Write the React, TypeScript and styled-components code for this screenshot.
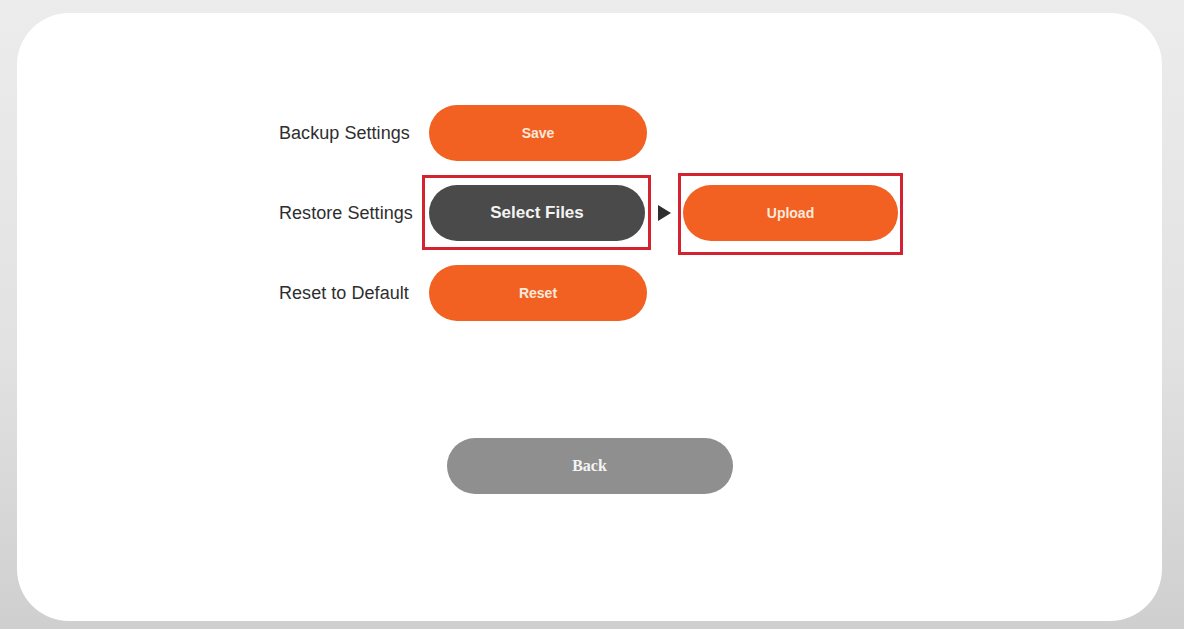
import styled, { createGlobalStyle } from 'styled-components';

const GlobalStyle = createGlobalStyle`
  html, body {
    margin: 0;
    padding: 0;
    height: 100%;
  }
  body {
    font-family: "Liberation Sans", Arial, sans-serif;
    background: linear-gradient(180deg, #ececec 0%, #e2e2e2 55%, #cfcfcf 100%);
  }
  #root {
    height: 100%;
  }
`;

const Page = styled.div`
  box-sizing: border-box;
  height: 629px;
  padding: 13px 22px 8px 17px;
  display: flex;
`;

const Card = styled.main`
  flex: 1;
  background: #ffffff;
  border-radius: 52px;
  padding-top: 92px;
  display: flex;
  flex-direction: column;
`;

const SettingsGrid = styled.div`
  display: grid;
  grid-template-columns: 150px auto;
  grid-auto-rows: 56px;
  row-gap: 24px;
  margin-left: 262px;
  align-items: center;
`;

const Label = styled.span`
  font-size: 18px;
  color: #2e2e2e;
  letter-spacing: 0.05px;
  white-space: nowrap;
`;

const Actions = styled.div`
  display: flex;
  align-items: center;
  gap: 12px;
  height: 100%;
`;

type Tone = 'orange' | 'dark' | 'gray';

const tones: Record<Tone, string> = {
  orange: '#f26122',
  dark: '#4a4a4a',
  gray: '#8f8f8f',
};

const PillButton = styled.button<{ $tone: Tone; $width?: number; $mark?: string }>`
  position: relative;
  box-sizing: border-box;
  width: ${(p) => p.$width ?? 217}px;
  height: 56px;
  border: none;
  border-radius: 28px;
  background: ${(p) => tones[p.$tone]};
  color: ${(p) => (p.$tone === 'orange' ? '#fbe9dc' : '#f4f4f4')};
  font-family: "Liberation Sans", Arial, sans-serif;
  font-weight: 700;
  font-size: 14px;
  cursor: pointer;
  padding: 0;

  ${(p) =>
    p.$mark &&
    `
    &::after {
      content: '';
      position: absolute;
      inset: ${p.$mark};
      border: 3px solid #d42230;
      pointer-events: none;
    }
  `}
`;

const SelectLabel = styled.span`
  font-size: 17px;
`;

const BackLabel = styled.span`
  font-family: "Liberation Serif", "Times New Roman", serif;
  font-size: 16px;
`;

const Arrow = styled.svg`
  width: 14px;
  height: 16px;
  flex: none;
`;

const Footer = styled.div`
  display: flex;
  justify-content: center;
  margin-top: 117px;
`;

export default function App() {
  return (
    <>
      <GlobalStyle />
      <Page>
        <Card>
          <SettingsGrid>
            <Label>Backup Settings</Label>
            <Actions>
              <PillButton $tone="orange" $width={218} type="button">
                Save
              </PillButton>
            </Actions>

            <Label>Restore Settings</Label>
            <Actions>
              <PillButton $tone="dark" $width={216} $mark="-10px -6px -9px -7px" type="button">
                <SelectLabel>Select Files</SelectLabel>
              </PillButton>
              <Arrow viewBox="0 0 14 16">
                <path d="M1 0 L14 8 L1 16 Z" fill="#2e2e2e" />
              </Arrow>
              <PillButton $tone="orange" $width={215} $mark="-12px -5px -14px -5px" type="button">
                Upload
              </PillButton>
            </Actions>

            <Label>Reset to Default</Label>
            <Actions>
              <PillButton $tone="orange" $width={218} type="button">
                Reset
              </PillButton>
            </Actions>
          </SettingsGrid>

          <Footer>
            <PillButton $tone="gray" $width={286} type="button">
              <BackLabel>Back</BackLabel>
            </PillButton>
          </Footer>
        </Card>
      </Page>
    </>
  );
}
